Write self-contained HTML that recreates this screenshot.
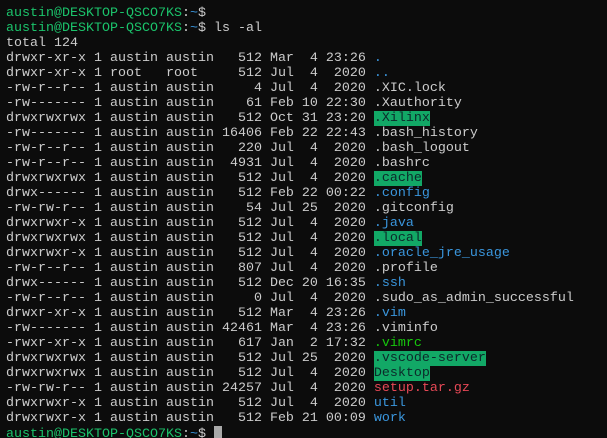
<!DOCTYPE html>
<html><head><meta charset="utf-8"><style>
html,body{margin:0;padding:0;background:#0c0c0c;width:607px;height:438px;overflow:hidden}
pre{margin:0;padding:6px 0 0 6px;font-family:"Liberation Mono","DejaVu Sans Mono",monospace;font-size:13.33px;line-height:15px;color:#cccccc;white-space:pre}
.g{color:#16c60c}.p{color:#1bc36b}.b{color:#3a96dd}.r{color:#e74856}
.h{background:#12a866;color:#0c2a2a}
.c{display:inline-block;width:8px;height:14px;background:#a8a8a8;vertical-align:-3px}
</style></head><body><pre><span class="p">austin@DESKTOP-QSCO7KS</span>:<span class="b">~</span>$
<span class="p">austin@DESKTOP-QSCO7KS</span>:<span class="b">~</span>$ ls -al
total 124
drwxr-xr-x 1 austin austin   512 Mar  4 23:26 <span class="b">.</span>
drwxr-xr-x 1 root   root     512 Jul  4  2020 <span class="b">..</span>
-rw-r--r-- 1 austin austin     4 Jul  4  2020 .XIC.lock
-rw------- 1 austin austin    61 Feb 10 22:30 .Xauthority
drwxrwxrwx 1 austin austin   512 Oct 31 23:20 <span class="h">.Xilinx</span>
-rw------- 1 austin austin 16406 Feb 22 22:43 .bash_history
-rw-r--r-- 1 austin austin   220 Jul  4  2020 .bash_logout
-rw-r--r-- 1 austin austin  4931 Jul  4  2020 .bashrc
drwxrwxrwx 1 austin austin   512 Jul  4  2020 <span class="h">.cache</span>
drwx------ 1 austin austin   512 Feb 22 00:22 <span class="b">.config</span>
-rw-rw-r-- 1 austin austin    54 Jul 25  2020 .gitconfig
drwxrwxr-x 1 austin austin   512 Jul  4  2020 <span class="b">.java</span>
drwxrwxrwx 1 austin austin   512 Jul  4  2020 <span class="h">.local</span>
drwxrwxr-x 1 austin austin   512 Jul  4  2020 <span class="b">.oracle_jre_usage</span>
-rw-r--r-- 1 austin austin   807 Jul  4  2020 .profile
drwx------ 1 austin austin   512 Dec 20 16:35 <span class="b">.ssh</span>
-rw-r--r-- 1 austin austin     0 Jul  4  2020 .sudo_as_admin_successful
drwxr-xr-x 1 austin austin   512 Mar  4 23:26 <span class="b">.vim</span>
-rw------- 1 austin austin 42461 Mar  4 23:26 .viminfo
-rwxr-xr-x 1 austin austin   617 Jan  2 17:32 <span class="g">.vimrc</span>
drwxrwxrwx 1 austin austin   512 Jul 25  2020 <span class="h">.vscode-server</span>
drwxrwxrwx 1 austin austin   512 Jul  4  2020 <span class="h">Desktop</span>
-rw-rw-r-- 1 austin austin 24257 Jul  4  2020 <span class="r">setup.tar.gz</span>
drwxrwxr-x 1 austin austin   512 Jul  4  2020 <span class="b">util</span>
drwxrwxr-x 1 austin austin   512 Feb 21 00:09 <span class="b">work</span>
<span class="p">austin@DESKTOP-QSCO7KS</span>:<span class="b">~</span>$ <span class="c"></span></pre></body></html>
